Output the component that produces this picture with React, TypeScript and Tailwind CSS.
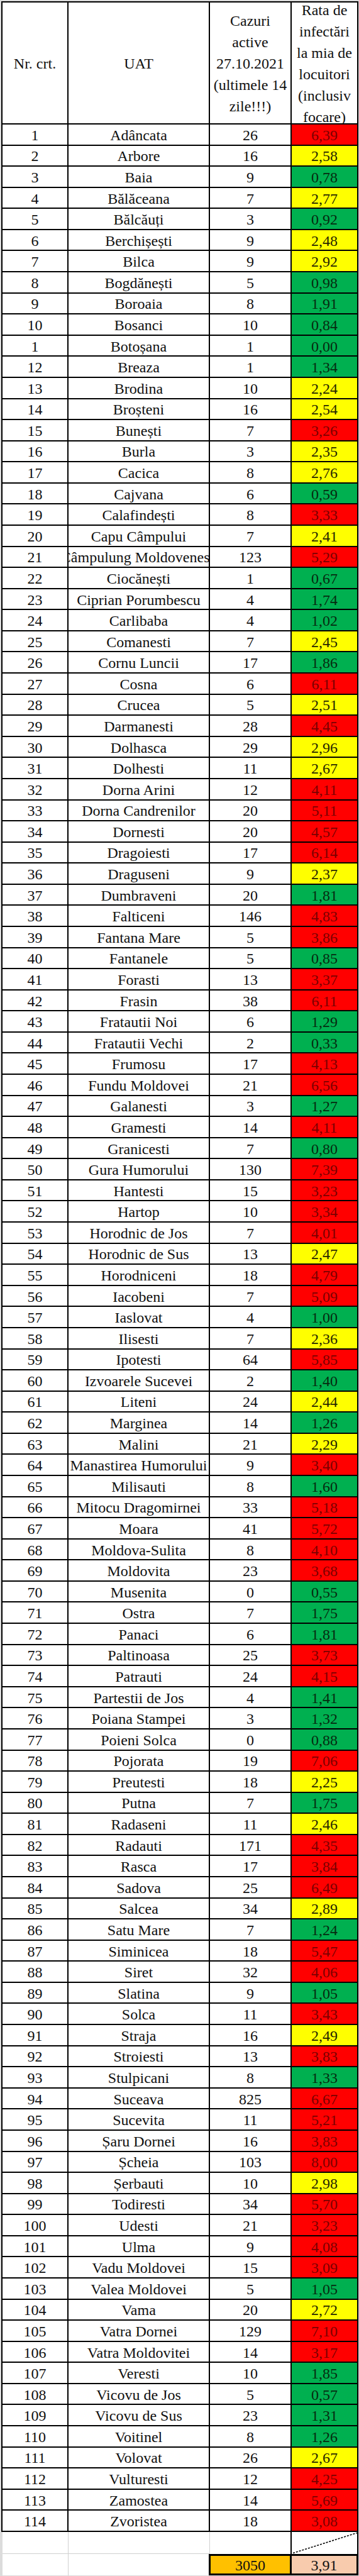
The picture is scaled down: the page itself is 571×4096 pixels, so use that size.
type Level = "r" | "y" | "g";

// nr | UAT | cazuri active | rata | culoare
const raw = `1|Adâncata|26|6,39|r
2|Arbore|16|2,58|y
3|Baia|9|0,78|g
4|Bălăceana|7|2,77|y
5|Bălcăuți|3|0,92|g
6|Berchișești|9|2,48|y
7|Bilca|9|2,92|y
8|Bogdănești|5|0,98|g
9|Boroaia|8|1,91|g
10|Bosanci|10|0,84|g
1|Botoșana|1|0,00|g
12|Breaza|1|1,34|g
13|Brodina|10|2,24|y
14|Broșteni|16|2,54|y
15|Bunești|7|3,26|r
16|Burla|3|2,35|y
17|Cacica|8|2,76|y
18|Cajvana|6|0,59|g
19|Calafindești|8|3,33|r
20|Capu Câmpului|7|2,41|y
21|Câmpulung Moldovenesc|123|5,29|r
22|Ciocănești|1|0,67|g
23|Ciprian Porumbescu|4|1,74|g
24|Carlibaba|4|1,02|g
25|Comanesti|7|2,45|y
26|Cornu Luncii|17|1,86|g
27|Cosna|6|6,11|r
28|Crucea|5|2,51|y
29|Darmanesti|28|4,45|r
30|Dolhasca|29|2,96|y
31|Dolhesti|11|2,67|y
32|Dorna Arini|12|4,11|r
33|Dorna Candrenilor|20|5,11|r
34|Dornesti|20|4,57|r
35|Dragoiesti|17|6,14|r
36|Draguseni|9|2,37|y
37|Dumbraveni|20|1,81|g
38|Falticeni|146|4,83|r
39|Fantana Mare|5|3,86|r
40|Fantanele|5|0,85|g
41|Forasti|13|3,37|r
42|Frasin|38|6,11|r
43|Fratautii Noi|6|1,29|g
44|Fratautii Vechi|2|0,33|g
45|Frumosu|17|4,13|r
46|Fundu Moldovei|21|6,56|r
47|Galanesti|3|1,27|g
48|Gramesti|14|4,11|r
49|Granicesti|7|0,80|g
50|Gura Humorului|130|7,39|r
51|Hantesti|15|3,23|r
52|Hartop|10|3,34|r
53|Horodnic de Jos|7|4,01|r
54|Horodnic de Sus|13|2,47|y
55|Horodniceni|18|4,79|r
56|Iacobeni|7|5,09|r
57|Iaslovat|4|1,00|g
58|Ilisesti|7|2,36|y
59|Ipotesti|64|5,85|r
60|Izvoarele Sucevei|2|1,40|g
61|Liteni|24|2,44|y
62|Marginea|14|1,26|g
63|Malini|21|2,29|y
64|Manastirea Humorului|9|3,40|r
65|Milisauti|8|1,60|g
66|Mitocu Dragomirnei|33|5,18|r
67|Moara|41|5,72|r
68|Moldova-Sulita|8|4,10|r
69|Moldovita|23|3,68|r
70|Musenita|0|0,55|g
71|Ostra|7|1,75|g
72|Panaci|6|1,81|g
73|Paltinoasa|25|3,73|r
74|Patrauti|24|4,15|r
75|Partestii de Jos|4|1,41|g
76|Poiana Stampei|3|1,32|g
77|Poieni Solca|0|0,88|g
78|Pojorata|19|7,06|r
79|Preutesti|18|2,25|y
80|Putna|7|1,75|g
81|Radaseni|11|2,46|y
82|Radauti|171|4,35|r
83|Rasca|17|3,84|r
84|Sadova|25|6,49|r
85|Salcea|34|2,89|y
86|Satu Mare|7|1,24|g
87|Siminicea|18|5,47|r
88|Siret|32|4,06|r
89|Slatina|9|1,05|g
90|Solca|11|3,43|r
91|Straja|16|2,49|y
92|Stroiesti|13|3,83|r
93|Stulpicani|8|1,33|g
94|Suceava|825|6,67|r
95|Sucevita|11|5,21|r
96|Șaru Dornei|16|3,83|r
97|Șcheia|103|8,00|r
98|Șerbauti|10|2,98|y
99|Todiresti|34|5,70|r
100|Udesti|21|3,23|r
101|Ulma|9|4,08|r
102|Vadu Moldovei|15|3,09|r
103|Valea Moldovei|5|1,05|g
104|Vama|20|2,72|y
105|Vatra Dornei|129|7,10|r
106|Vatra Moldovitei|14|3,17|r
107|Veresti|10|1,85|g
108|Vicovu de Jos|5|0,57|g
109|Vicovu de Sus|23|1,31|g
110|Voitinel|8|1,26|g
111|Volovat|26|2,67|y
112|Vulturesti|12|4,25|r
113|Zamostea|14|5,69|r
114|Zvoristea|18|3,08|r`;

const rows = raw.split("\n").map((line) => {
  const [nr, uat, cazuri, rata, level] = line.split("|");
  return { nr, uat, cazuri, rata, level: level as Level };
});

const levelClass: Record<Level, string> = {
  r: "bg-[#ff0000] text-[#7a0000]",
  y: "bg-[#ffff00] text-[#262600]",
  g: "bg-[#00b050] text-[#062b10]",
};

const cell = "flex items-center justify-center overflow-hidden whitespace-nowrap border-r-2 border-b-2 border-black pt-[2px]";

export default function App() {
  return (
    <div className="min-h-screen bg-[#dcdcdc] pt-[2px] pl-[2px] pb-[1px] font-['Liberation_Serif','Times_New_Roman',serif] text-[24px] text-[#111]">
      <div className="w-[568px] bg-white">
        {/* Header */}
        <div className="flex h-[196px] border-t-2 border-l-2 border-black leading-[34px] text-center">
          <div className={`${cell} w-[105px]`}>Nr. crt.</div>
          <div className={`${cell} w-[225px]`}>UAT</div>
          <div className={`${cell} w-[130px]`}>
            <span>
              Cazuri
              <br />
              active
              <br />
              27.10.2021
              <br />
              (ultimele 14
              <br />
              zile!!!)
            </span>
          </div>
          <div className={`${cell} w-[106px]`}>
            <span>
              Rata de
              <br />
              infectări
              <br />
              la mia de
              <br />
              locuitori
              <br />
              (inclusiv
              <br />
              focare)
            </span>
          </div>
        </div>

        {/* Rows */}
        {rows.map((r, i) => (
          <div key={i} className="flex h-[33.58px] border-l-2 border-black">
            <div className={`${cell} w-[105px]`}>{r.nr}</div>
            <div className={`${cell} w-[225px]`}>
              <span className="shrink-0">{r.uat}</span>
            </div>
            <div className={`${cell} w-[130px]`}>{r.cazuri}</div>
            <div className={`${cell} w-[106px] ${levelClass[r.level]}`}>{r.rata}</div>
          </div>
        ))}

        {/* Empty row with diagonal */}
        <div className="flex h-[35px] border-l-2 border-[#dcdcdc]">
          <div className="w-[105px] border-r border-b border-[#d0d0d0]" />
          <div className="w-[225px] border-r border-b border-[#d0d0d0]" />
          <div className="w-[130px] border-r-2 border-black" />
          <div className="relative w-[106px] border-r-2 border-black">
            <svg className="absolute inset-0 h-full w-full" preserveAspectRatio="none" viewBox="0 0 100 100">
              <line
                x1="2"
                y1="96"
                x2="100"
                y2="4"
                stroke="#000"
                strokeWidth="1.6"
                strokeDasharray="3 2"
                vectorEffect="non-scaling-stroke"
              />
            </svg>
          </div>
        </div>

        {/* Total */}
        <div className="flex h-[34px] border-l-2 border-[#dcdcdc]">
          <div className="w-[105px] border-r border-[#d0d0d0]" />
          <div className="w-[223px]" />
          <div className="flex w-[132px] items-center justify-center border-[3px] border-black bg-[#ffc000] pt-[2px]">
            3050
          </div>
          <div className="flex w-[106px] items-center justify-center border-y-[3px] border-r-[3px] border-black bg-[#f8cbad] pt-[2px]">
            3,91
          </div>
        </div>
      </div>
    </div>
  );
}
